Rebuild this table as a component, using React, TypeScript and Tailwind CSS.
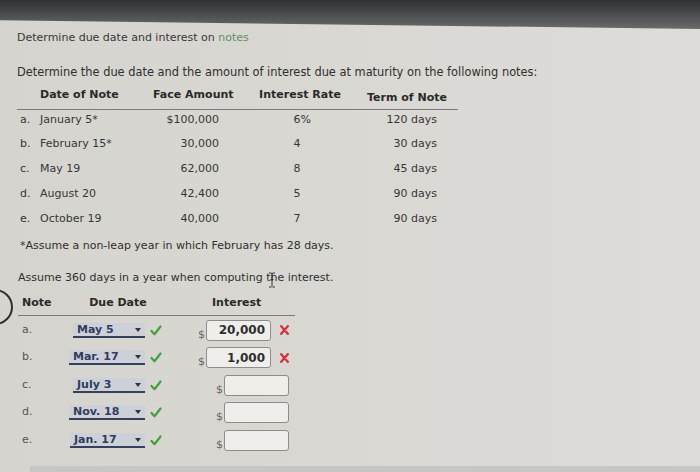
import React from "react";

type NoteRow = {
  letter: string;
  date: string;
  face: string;
  rate: string;
  pct: boolean;
  term: string;
};

type AnswerRow = {
  letter: string;
  due: string;
  selectClass: string;
  interest: string;
  wrong: boolean;
};

const NOTES: NoteRow[] = [
  { letter: "a.", date: "January 5*", face: "$100,000", rate: "6", pct: true, term: "120 days" },
  { letter: "b.", date: "February 15*", face: "30,000", rate: "4", pct: false, term: "30 days" },
  { letter: "c.", date: "May 19", face: "62,000", rate: "8", pct: false, term: "45 days" },
  { letter: "d.", date: "August 20", face: "42,400", rate: "5", pct: false, term: "90 days" },
  { letter: "e.", date: "October 19", face: "40,000", rate: "7", pct: false, term: "90 days" },
];

// select boxes in the photo don't line up perfectly, keep the offsets
const ANSWERS: AnswerRow[] = [
  { letter: "a.", due: "May 5", selectClass: "ml-[3px] w-[72px]", interest: "20,000", wrong: true },
  { letter: "b.", due: "Mar. 17", selectClass: "ml-[-1px] w-[76px]", interest: "1,000", wrong: true },
  { letter: "c.", due: "July 3", selectClass: "ml-[3px] w-[72px]", interest: "", wrong: false },
  { letter: "d.", due: "Nov. 18", selectClass: "ml-[-1px] w-[76px]", interest: "", wrong: false },
  { letter: "e.", due: "Jan. 17", selectClass: "ml-0 w-[75px]", interest: "", wrong: false },
];

function DueSelect({ value, className }: { value: string; className: string }) {
  return (
    <div
      className={`relative flex h-[15px] items-center border-b-2 border-[#34405c] bg-[#cdd0d8] pl-[4px] ${className}`}
    >
      <span className="text-[11px] font-bold leading-none text-[#2f3d5e]">{value}</span>
      <span className="absolute right-[4px] top-[5px] h-0 w-0 border-x-[3px] border-t-[4px] border-x-transparent border-t-[#333]" />
    </div>
  );
}

function Check() {
  return (
    <svg className="ml-[5px]" width="12" height="11" viewBox="0 0 12 11" fill="none">
      <path d="M1.5 6l3 3.2L10.5 1.5" stroke="#43a03c" strokeWidth="2.2" strokeLinecap="round" strokeLinejoin="round" />
    </svg>
  );
}

function Cross() {
  return (
    <svg className="ml-[9px]" width="9" height="10" viewBox="0 0 9 10" fill="none">
      <path d="M1.2 1.2l6.6 7.6M7.8 1.2L1.2 8.8" stroke="#d82f3d" strokeWidth="2.3" strokeLinecap="round" />
    </svg>
  );
}

function MoneyBox({ value }: { value: string }) {
  return (
    <div className="flex items-end">
      <span className="mb-[1px] mr-[1px] text-[11px] leading-none text-[#666]">$</span>
      <div className="flex h-[21px] w-[65px] items-center justify-end rounded-[3px] border border-[#8c8c8a] bg-[#efeeea] pr-[5px] text-[12px] font-bold text-[#2e2e2e]">
        {value}
      </div>
    </div>
  );
}

export default function App() {
  return (
    <div className="relative h-[472px] w-[700px] overflow-hidden bg-gradient-to-r from-[#d6d4cf] via-[#dad8d3] to-[#dddcd8] font-['DejaVu_Sans',sans-serif] text-[11px] text-[#333]">
      {/* monitor bezel at the top of the photo */}
      <div className="h-[29px] bg-gradient-to-b from-[#2f3234] via-[#4b4e4f] to-[#6a6c6b] [clip-path:polygon(0_0,100%_0,100%_100%,0_70%)]" />

      <div className="pl-[17px]">
        <p className="h-[17px] text-[11px] leading-[17px] text-[#383838]">
          Determine due date and interest on <span className="text-[#5f8f63]">notes</span>
        </p>
        <p className="mt-[17px] h-[18px] whitespace-nowrap text-[11.4px] leading-[18px] text-[#2f2f2f]">
          Determine the due date and the amount of interest due at maturity on the following notes:
        </p>

        {/* notes table */}
        <div className="mt-[5px] w-[441px]">
          <div className="flex h-[24px] items-start whitespace-nowrap border-b-[1.5px] border-[#7a7a78] font-bold leading-[18px] text-[#2a2a2a]">
            <div className="w-[136px] pl-[23px]">Date of Note</div>
            <div className="w-[80px] text-center">Face Amount</div>
            <div className="w-[26px]" />
            <div className="w-[82px] text-center">Interest Rate</div>
            <div className="w-[26px]" />
            <div className="w-[80px] pt-[3px] text-center">Term of Note</div>
          </div>
          <div className="mt-[-2.5px]">
            {NOTES.map((n) => (
              <div key={n.letter} className="flex h-[24.75px] items-center whitespace-nowrap text-[#363636]">
                <div className="w-[136px] pl-[3px]">
                  <span className="inline-block w-[20px]">{n.letter}</span>
                  {n.date}
                </div>
                <div className="w-[80px] pr-[14px] text-right">{n.face}</div>
                <div className="w-[26px]" />
                <div className="w-[82px] pr-[30px] text-right">
                  {n.rate}
                  <span className={n.pct ? "" : "invisible"}>%</span>
                </div>
                <div className="w-[26px]" />
                <div className="w-[80px] pr-[10px] text-right">{n.term}</div>
              </div>
            ))}
          </div>
        </div>

        <p className="mt-[6px] h-[18px] pl-[3px] leading-[18px] text-[#2f2f2f]">
          *Assume a non-leap year in which February has 28 days.
        </p>
        <p className="relative mt-[14px] h-[18px] pl-[1px] leading-[18px] text-[#2f2f2f]">
          Assume 360 days in a year when computing the interest.
          <svg
            className="absolute left-[251px] top-[3px]"
            width="8"
            height="16"
            viewBox="0 0 8 16"
            fill="none"
            stroke="#333"
            strokeWidth="1"
          >
            <path d="M1 1h2.5M4.5 1H7M4 1.5v13M1 15h2.5M4.5 15H7M2.5 7.5h3" />
          </svg>
        </p>

        {/* answer table */}
        <div className="mt-[7px] ml-[1px] w-[277px]">
          <div className="flex h-[22px] items-start border-b-[1.5px] border-[#7a7a78] font-bold leading-[18px] text-[#2a2a2a]">
            <div className="w-[52px] pl-[4px]">Note</div>
            <div className="w-[96px] text-center">Due Date</div>
            <div className="w-[129px] pl-[46px]">Interest</div>
          </div>
          {ANSWERS.map((r) => (
            <div key={r.letter} className="flex h-[27.5px] items-center">
              <div className="w-[52px] pl-[4px] text-[#555]">{r.letter}</div>
              <div className="flex w-[96px] items-center">
                <DueSelect value={r.due} className={r.selectClass} />
                <Check />
              </div>
              <div className={`flex items-center ${r.wrong ? "pl-[32px]" : "pl-[50px]"}`}>
                <MoneyBox value={r.interest} />
                {r.wrong && <Cross />}
              </div>
            </div>
          ))}
        </div>
      </div>

      <div className="ml-[30px] mt-[12px] h-[8px] bg-[#c6c7c4]" />

      {/* edge of a circled marker cut off by the photo */}
      <div className="absolute left-[-23px] top-[289px] h-[36px] w-[36px] rounded-full border-2 border-[#2e2e2e]" />
    </div>
  );
}
